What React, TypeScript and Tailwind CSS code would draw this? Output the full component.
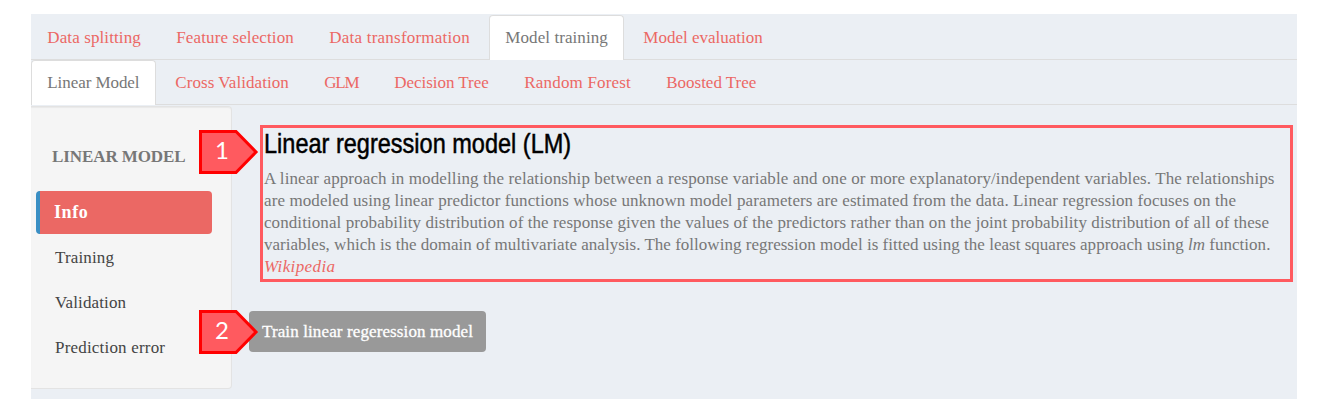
type Tab = { label: string; box: string; tracking: string; active?: boolean };

const mainTabs: Tab[] = [
  { label: "Data splitting", box: "w-[126px]", tracking: "tracking-[0.109px]" },
  { label: "Feature selection", box: "w-[150px]", tracking: "tracking-[0.115px]" },
  { label: "Data transformation", box: "w-[173px]", tracking: "tracking-[0.22px]" },
  { label: "Model training", box: "w-[135px]", tracking: "tracking-[0.076px]", active: true },
  { label: "Model evaluation", box: "w-[152px]", tracking: "tracking-[0.003px]" },
];

const modelTabs: Tab[] = [
  { label: "Linear Model", box: "w-[125px]", tracking: "tracking-[-0.07px]", active: true },
  { label: "Cross Validation", box: "w-[146px]", tracking: "tracking-[0.063px]" },
  { label: "GLM", box: "w-[67px]", tracking: "tracking-[-1.2px]" },
  { label: "Decision Tree", box: "w-[127px]", tracking: "tracking-[-0.035px]" },
  { label: "Random Forest", box: "w-[139px]", tracking: "tracking-[0.178px]" },
  { label: "Boosted Tree", box: "w-[122px]", tracking: "tracking-[-0.02px]" },
];

const sections = [
  { label: "Training", tracking: "tracking-[0.15px]" },
  { label: "Validation", tracking: "tracking-[0.13px]" },
  { label: "Prediction error", tracking: "tracking-[0.19px]" },
];

function TabBar({ tabs }: { tabs: Tab[] }) {
  return (
    <nav className="flex h-[45px] gap-[3px] border-b border-[#dddddd]">
      {tabs.map((t) => (
        <a
          key={t.label}
          className={`${t.box} ${t.tracking} -mb-px h-[45px] shrink-0 rounded-t border border-b-0 pl-[15.3px] text-[17px] leading-[43px] whitespace-nowrap ${
            t.active ? "border-[#dddddd] bg-white text-[#777777]" : "border-transparent text-[#eb6864]"
          }`}
        >
          {t.label}
        </a>
      ))}
    </nav>
  );
}

function Callout({ n }: { n: number }) {
  return (
    <div className="relative h-[44px] w-[60px]">
      <svg className="absolute inset-0" width="60" height="44" viewBox="0 0 60 44">
        <path d="M1.5 1.5H37L57 22L37 42.5H1.5Z" fill="#ff5a5f" stroke="#ff0000" strokeWidth="3" />
      </svg>
      <span className="absolute top-0 left-0 w-[46px] text-center font-['Lato','Liberation_Sans',sans-serif] text-[24px] leading-[39px] text-white">
        {n}
      </span>
    </div>
  );
}

export default function App() {
  return (
    <div className="h-[411px] w-[1328px] overflow-hidden bg-white pt-[14px] pl-[31px] font-['Liberation_Serif',serif]">
      <div className="relative h-[385px] w-[1266px] bg-[#ebeff4]">
        <div className="pt-px">
          <TabBar tabs={mainTabs} />
          <TabBar tabs={modelTabs} />
        </div>

        <div className="flex">
          <aside className="mt-[1px] h-[283px] w-[201px] shrink-0 rounded-r border border-l-0 border-[#e3e3e3] bg-[#f5f5f5] text-[17px] shadow-[inset_0_1px_1px_rgba(0,0,0,0.05)]">
            <h4 className="mt-[38px] ml-[21px] leading-[24px] font-bold tracking-[-0.09px] whitespace-nowrap text-[#777777]">
              LINEAR MODEL
            </h4>
            <div className="mt-[22px] ml-[5px] h-[43px] w-[176px] rounded border-l-4 border-[#3a8fc4] bg-[#eb6864] pl-[14px] text-[18px] leading-[42px] font-bold tracking-[0.6px] text-white">
              Info
            </div>
            <ul className="ml-[24px] pt-[2px] text-[#444444]">
              {sections.map((s) => (
                <li key={s.label} className={`${s.tracking} h-[45px] leading-[44px]`}>
                  {s.label}
                </li>
              ))}
            </ul>
          </aside>

          <main className="pt-[20px] pl-[16px]">
            <section className="ml-[12px] h-[157px] w-[1033px] border-[3px] border-[#ff5a5f] pl-px">
              <h3 className="h-[40px] w-[373px] origin-left scale-x-[0.84] font-['Liberation_Sans',sans-serif] text-[28px] leading-[31px] font-normal whitespace-nowrap text-black [-webkit-text-stroke:0.5px_black]">
                Linear regression model (LM)
              </h3>
              <p className="text-[17px] leading-[22px] whitespace-nowrap text-[#777777]">
                <span className="block tracking-[0.106px]">
                  A linear approach in modelling the relationship between a response variable and one or more explanatory/independent variables. The relationships
                </span>
                <span className="block tracking-[0.094px]">
                  are modeled using linear predictor functions whose unknown model parameters are estimated from the data. Linear regression focuses on the
                </span>
                <span className="block tracking-[0.077px]">
                  conditional probability distribution of the response given the values of the predictors rather than on the joint probability distribution of all of these
                </span>
                <span className="block tracking-[0.02px]">
                  variables, which is the domain of multivariate analysis. The following regression model is fitted using the least squares approach using <em>lm</em> function.
                </span>
                <a className="block tracking-[0.377px] text-[#eb6864] italic">Wikipedia</a>
              </p>
            </section>
            <button className="mt-[29px] ml-px block h-[41px] w-[237px] rounded bg-[#999999] pl-[13px] text-left text-[17px] leading-[41px] tracking-[0.118px] whitespace-nowrap text-white [-webkit-text-stroke:0.3px_white]">
              Train linear regeression model
            </button>
          </main>
        </div>

        <div className="absolute top-[116px] left-[168px]">
          <Callout n={1} />
        </div>
        <div className="absolute top-[296px] left-[168px]">
          <Callout n={2} />
        </div>
      </div>
    </div>
  );
}
